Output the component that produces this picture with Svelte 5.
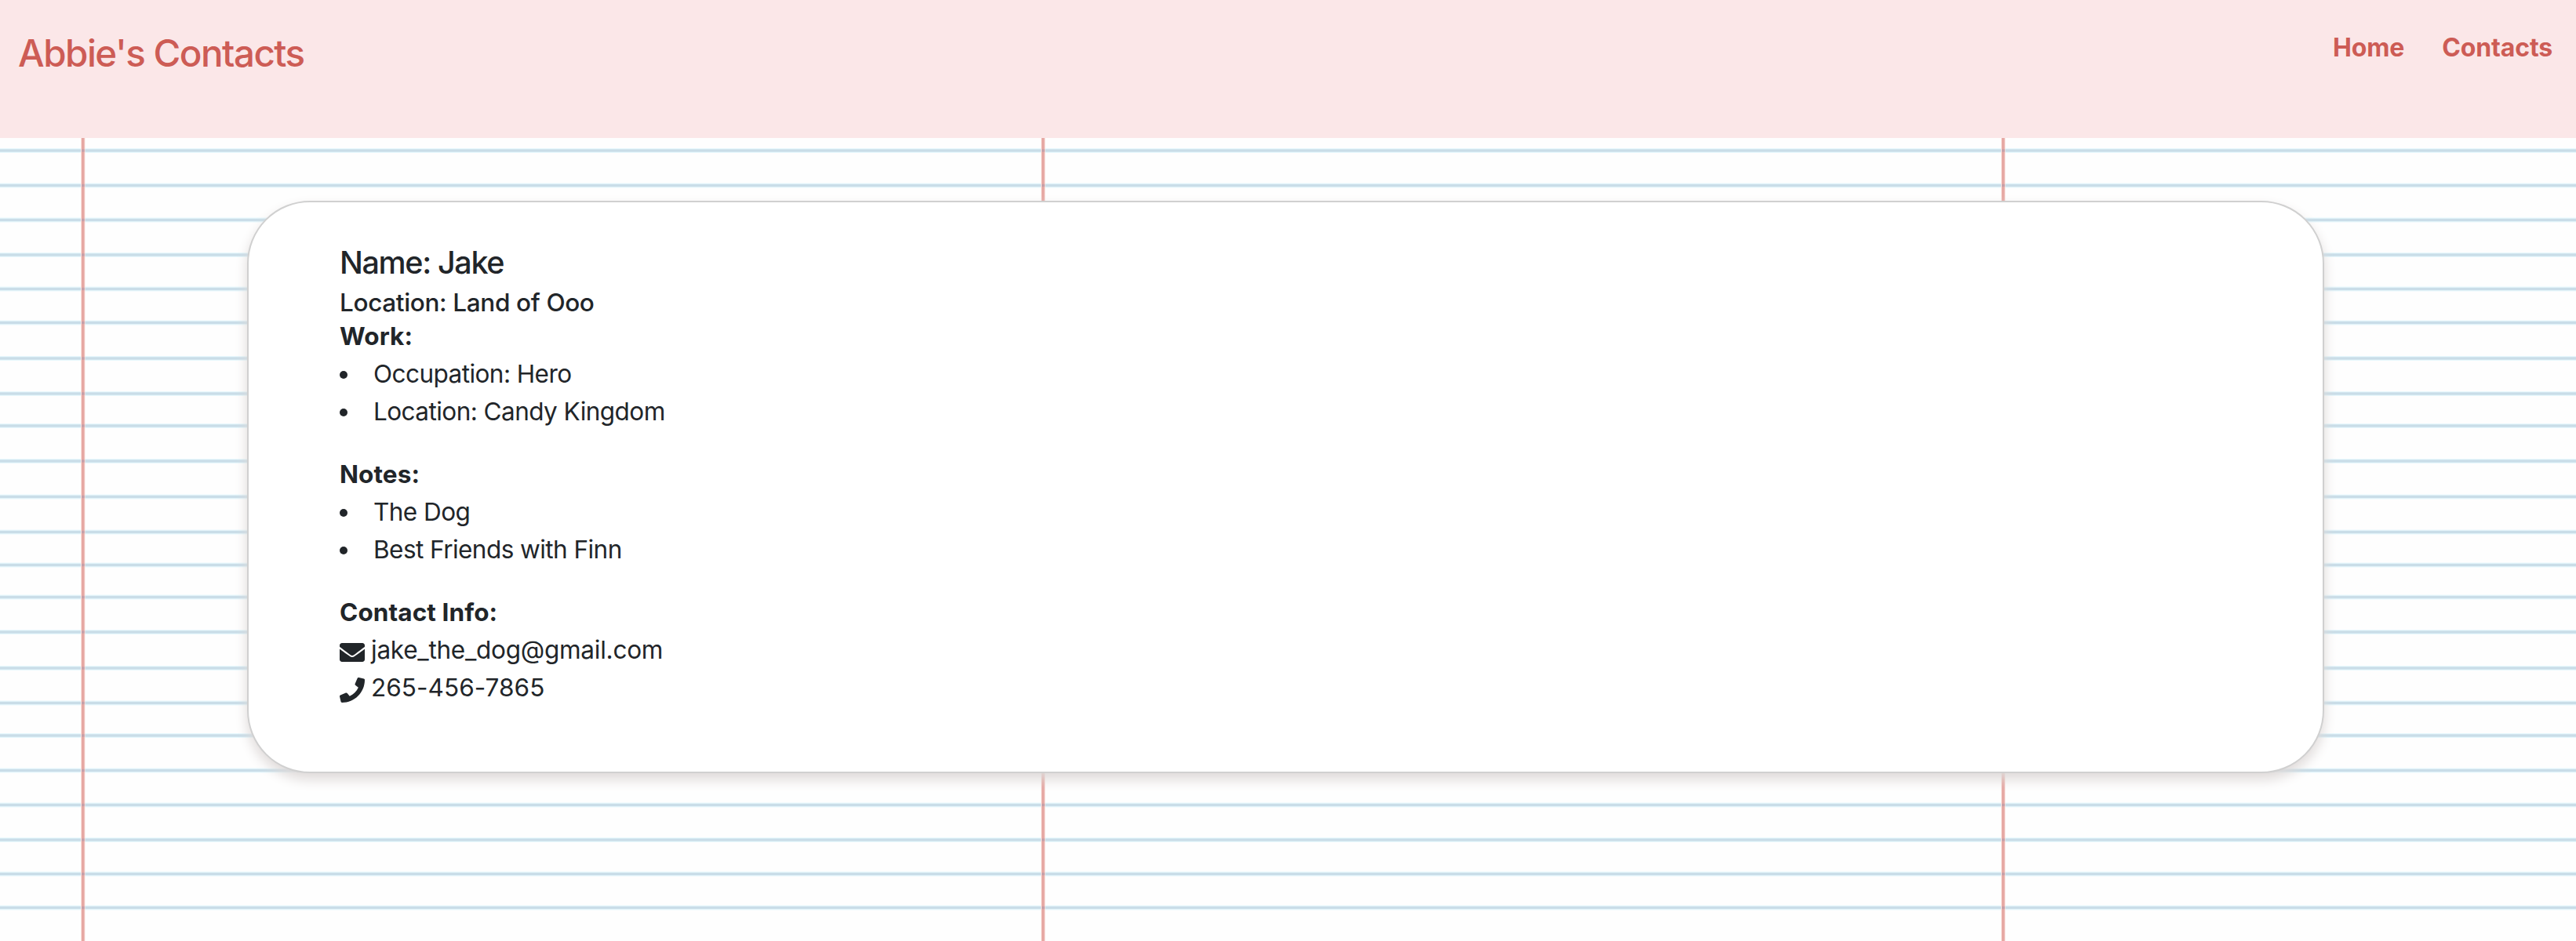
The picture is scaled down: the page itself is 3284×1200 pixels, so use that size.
<script>
  const navLinks = ['Home', 'Contacts'];

  const contact = {
    name: 'Jake',
    location: 'Land of Ooo',
    work: ['Occupation: Hero', 'Location: Candy Kingdom'],
    notes: ['The Dog', 'Best Friends with Finn'],
    email: 'jake_the_dog@gmail.com',
    phone: '265-456-7865'
  };

  // Rule positions inside one sheet of notebook paper
  const sheet = { width: 1224, height: 746 };
  const rules = [15.5, 60, 106, 150.5, 192, 236.5, 280.5, 325, 368.5, 411.5, 457, 502, 543, 588, 633.5, 678.5, 720.5];
</script>

<div class="page">
  <svg class="paper" aria-hidden="true">
    <defs>
      <pattern id="sheet" width={sheet.width} height={sheet.height} patternUnits="userSpaceOnUse">
        {#each rules as y}
          <rect class="rule-halo" x="0" y={y - 3} width={sheet.width} height="6" />
          <rect class="rule" x="0" y={y - 1.7} width={sheet.width} height="3.4" />
        {/each}
        <rect class="margin-halo" x="103" y="0" width="5.5" height={sheet.height} />
        <rect class="margin" x="104" y="0" width="3.6" height={sheet.height} />
        {#each rules as y}
          <rect class="crossing" x="104" y={y - 1.7} width="3.6" height="3.4" />
        {/each}
      </pattern>
    </defs>
    <rect width="100%" height="100%" fill="url(#sheet)" />
  </svg>

  <header>
    <h1>Abbie's Contacts</h1>
    <nav>
      {#each navLinks as link}
        <a href="#{link.toLowerCase()}">{link}</a>
      {/each}
    </nav>
  </header>

  <main>
    <article class="card">
      <h2>Name: {contact.name}</h2>
      <h3>Location: {contact.location}</h3>

      <section>
        <h4>Work:</h4>
        <ul>
          {#each contact.work as item}<li>{item}</li>{/each}
        </ul>
      </section>

      <section>
        <h4>Notes:</h4>
        <ul>
          {#each contact.notes as item}<li>{item}</li>{/each}
        </ul>
      </section>

      <section>
        <h4>Contact Info:</h4>
        <p class="line email">
          <svg viewBox="0 0 512 512" aria-hidden="true">
            <path d="M502.3 190.8c3.9-3.1 9.7-.2 9.7 4.7V400c0 26.5-21.5 48-48 48H48c-26.5 0-48-21.5-48-48V195.6c0-5 5.7-7.8 9.7-4.7 22.4 17.4 52.1 39.5 154.1 113.6 21.1 15.4 56.7 47.8 92.2 47.6 35.7.3 72-32.8 92.3-47.6 102-74.1 131.6-96.3 154-113.7zM256 320c23.2.4 56.6-29.2 73.4-41.4 132.7-96.3 142.8-104.7 173.4-128.7 5.8-4.5 9.2-11.5 9.2-18.9v-19c0-26.5-21.5-48-48-48H48c-26.5 0-48 21.5-48 48v19c0 7.4 3.4 14.3 9.2 18.9 30.6 23.9 40.7 32.4 173.4 128.7 16.8 12.2 50.2 41.8 73.4 41.4z" />
          </svg>
          <span>{contact.email}</span>
        </p>
        <p class="line phone">
          <svg viewBox="0 0 512 512" aria-hidden="true">
            <path d="M493.4 24.6l-104-24c-11.3-2.6-22.9 3.3-27.5 13.9l-48 112c-4.2 9.8-1.4 21.3 6.9 28l60.6 49.6c-36 76.7-98.9 140.5-177.2 177.2l-49.6-60.6c-6.8-8.3-18.2-11.1-28-6.9l-112 48C3.9 366.5-2 378.1.6 389.4l24 104C27.1 504.2 36.7 512 48 512c256.1 0 464-207.5 464-464 0-11.2-7.7-20.9-18.6-23.4z" />
          </svg>
          <span>{contact.phone}</span>
        </p>
      </section>
    </article>
  </main>
</div>

<style>
  :global(body) {
    margin: 0;
    background: #fefefe;
  }

  .page {
    position: relative;
    height: 1200px;
    overflow: hidden;
    color: #212529;
    font: 420 31.5px/48px Inter, 'Liberation Sans', sans-serif;
  }

  .paper {
    position: absolute;
    inset: 0;
    z-index: -1;
    width: 100%;
    height: 100%;
  }

  .rule-halo { fill: #e8f8fd; }
  .rule { fill: #c9dde8; }
  .margin-halo { fill: #fae3df; }
  .margin { fill: #e6a8a3; }
  .crossing { fill: #c59fa8; }

  header {
    display: flex;
    justify-content: space-between;
    box-sizing: border-box;
    height: 176px;
    padding: 36px 30px 0 23px;
    background: #fbe7e8;
    color: #cd5c55;
  }

  h1, h2, h3, h4, p, ul { margin: 0; }

  h1 {
    font-size: 47.5px;
    line-height: 64px;
    font-weight: 540;
    letter-spacing: -1.5px;
  }

  nav {
    display: flex;
    gap: 48px;
    padding-top: 1px;
  }

  nav a {
    color: inherit;
    font-size: 32px;
    font-weight: 700;
    text-decoration: none;
    letter-spacing: -0.15px;
  }

  main { padding: 80px 321px 0 315px; }

  .card {
    box-sizing: border-box;
    height: 730px;
    padding: 53px 116px 0;
    border: 2px solid #d0d0d0;
    border-radius: 80px;
    background: #fff;
    box-shadow: 0 8px 16px #ded9d8;
  }

  h2 {
    margin-bottom: 8px;
    font-size: 39.5px;
    line-height: 48px;
    font-weight: 530;
    letter-spacing: -1.35px;
  }

  h3 {
    font-size: 31.5px;
    line-height: 38px;
    font-weight: 520;
    letter-spacing: -0.35px;
  }

  h4 {
    font-size: 31.5px;
    line-height: 48px;
    font-weight: 700;
    letter-spacing: 0.1px;
  }

  section { margin-bottom: 32px; }

  ul {
    padding: 0;
    list-style: none;
  }

  li {
    display: flex;
    align-items: center;
    gap: 33px;
    letter-spacing: -0.55px;
  }

  li::before {
    content: '';
    width: 10px;
    height: 10px;
    margin-top: 1px;
    border-radius: 50%;
    background: currentColor;
  }

  .line {
    display: flex;
    align-items: center;
    gap: 8px;
  }

  .email { letter-spacing: -0.25px; }
  .phone { letter-spacing: 0.05px; }

  .line svg {
    width: 32px;
    height: 32px;
    margin-top: 5px;
    fill: currentColor;
  }
</style>
